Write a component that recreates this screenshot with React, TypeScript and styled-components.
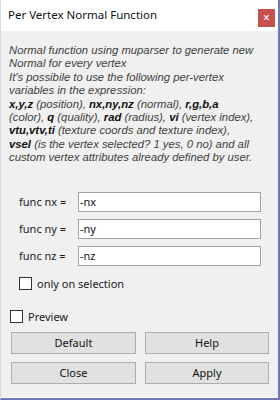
import { FC } from "react";
import styled, { createGlobalStyle } from "styled-components";

const GlobalStyle = createGlobalStyle`
  html, body {
    margin: 0;
    padding: 0;
    background: #ffffff;
  }
  * {
    box-sizing: border-box;
  }
`;

interface FuncRow {
  label: string;
  value: string;
}

const rows: FuncRow[] = [
  { label: "func nx =", value: "-nx" },
  { label: "func ny =", value: "-ny" },
  { label: "func nz =", value: "-nz" },
];

const App: FC = () => {
  return (
    <>
      <GlobalStyle />
      <Window>
        <TitleBar>
          <Title>Per Vertex Normal Function</Title>
          <CloseButton>×</CloseButton>
        </TitleBar>
        <Body>
          <Description>
            Normal function using muparser to generate new
            <br />
            Normal for every vertex
            <br />
            It's possibile to use the following per-vertex
            <br />
            variables in the expression:
            <br />
            <b>x,y,z</b> (position), <b>nx,ny,nz</b> (normal), <b>r,g,b,a</b>
            <br />
            (color), <b>q</b> (quality), <b>rad</b> (radius), <b>vi</b> (vertex
            index),
            <br />
            <b>vtu,vtv,ti</b> (texture coords and texture index),
            <br />
            <b>vsel</b> (is the vertex selected? 1 yes, 0 no) and all
            <br />
            custom vertex attributes already defined by user.
          </Description>
          <Form>
            {rows.map((row) => (
              <Row key={row.label}>
                <Label>{row.label}</Label>
                <Input defaultValue={row.value} />
              </Row>
            ))}
            <CheckRow indent={0} top={4}>
              <CheckBox />
              <CheckLabel>only on selection</CheckLabel>
            </CheckRow>
          </Form>
          <CheckRow indent={1} top={20}>
            <CheckBox />
            <CheckLabel>Preview</CheckLabel>
          </CheckRow>
          <ButtonGrid>
            <Button>Default</Button>
            <Button>Help</Button>
            <Button>Close</Button>
            <Button>Apply</Button>
          </ButtonGrid>
        </Body>
      </Window>
    </>
  );
};

export default App;

const Window = styled.div`
  width: 280px;
  height: 400px;
  display: flex;
  flex-direction: column;
  background: #f0f0f0;
  border-right: 2px solid #7078b8;
  border-bottom: 2px solid #7078b8;
  border-left: 1px solid #d8dbe6;
  font-family: "Noto Sans", "Open Sans", sans-serif;
  color: #1a1a1a;
  overflow: hidden;
`;

const TitleBar = styled.div`
  height: 31px;
  flex: none;
  display: flex;
  align-items: flex-start;
  justify-content: space-between;
  background: #ffffff;
  padding: 0 3px 0 7px;
`;

const Title = styled.span`
  margin-top: 7px;
  font-size: 11.5px;
  line-height: 16px;
  color: #111;
`;

const CloseButton = styled.div`
  margin-top: 9px;
  width: 17px;
  height: 18px;
  background: #c75050;
  color: #f4dede;
  font-size: 12px;
  font-weight: 700;
  line-height: 17px;
  text-align: center;
`;

const Body = styled.div`
  flex: 1;
  display: flex;
  flex-direction: column;
  padding: 13px 10px 0 8px;
  border-bottom: 1px solid #fafafa;
`;

const Description = styled.div`
  font-family: "Liberation Sans", Arial, sans-serif;
  font-style: italic;
  font-size: 11.3px;
  line-height: 13.4px;
  color: #404040;
  white-space: nowrap;

  b {
    font-weight: 700;
    color: #111;
  }
`;

const Form = styled.div`
  margin-top: 27px;
  padding-left: 10px;
  display: flex;
  flex-direction: column;
  gap: 7px;
`;

const Row = styled.div`
  display: flex;
  align-items: center;
  height: 20px;
`;

const Label = styled.span`
  width: 59px;
  font-size: 11px;
  color: #1a1a1a;
`;

const Input = styled.input`
  width: 183px;
  height: 20px;
  border: 1px solid #a2a2a2;
  background: #ffffff;
  padding: 0 1px;
  font-family: "Noto Sans", sans-serif;
  font-size: 11px;
  color: #111;
  outline: none;
`;

interface CheckRowProps {
  indent: number;
  top: number;
}

const CheckRow = styled.div<CheckRowProps>`
  display: flex;
  align-items: center;
  gap: 5px;
  height: 13px;
  margin-top: ${(props) => props.top}px;
  margin-left: ${(props) => props.indent}px;
`;

const CheckBox = styled.span`
  width: 13px;
  height: 13px;
  border: 1px solid #333;
  background: #ffffff;
  flex: none;
`;

const CheckLabel = styled.span`
  font-size: 11px;
  color: #1a1a1a;
`;

const ButtonGrid = styled.div`
  margin-top: 9px;
  margin-left: 2px;
  display: grid;
  grid-template-columns: 125px 124px;
  column-gap: 9px;
  row-gap: 8px;
`;

const Button = styled.button`
  height: 22px;
  border: 1px solid #adadad;
  background: #e1e1e1;
  font-family: "Noto Sans", sans-serif;
  font-size: 11px;
  color: #111;
  padding: 0;
`;
